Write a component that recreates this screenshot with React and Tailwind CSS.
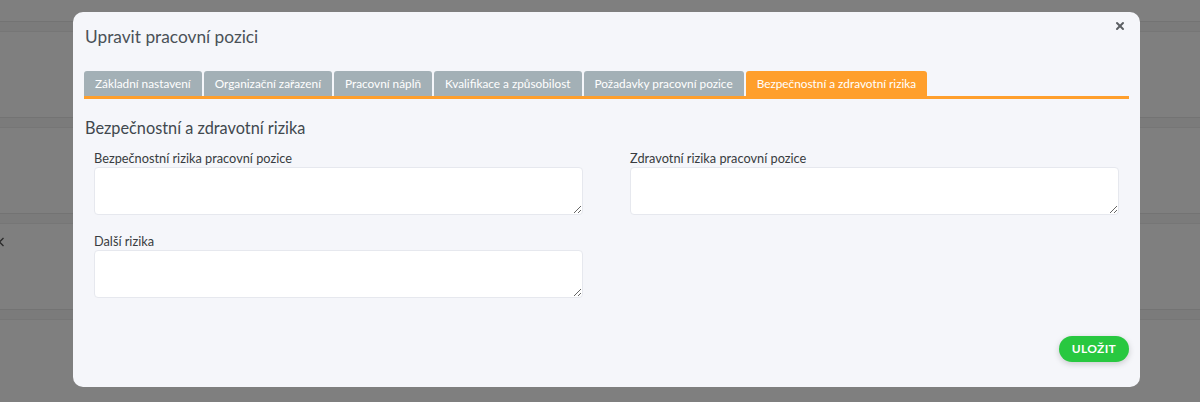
import { X } from "lucide-react";

const tabs = [
  "Základní nastavení",
  "Organizační zařazení",
  "Pracovní náplň",
  "Kvalifikace a způsobilost",
  "Požadavky pracovní pozice",
  "Bezpečnostní a zdravotní rizika",
];

const BgRow = ({ children }) => (
  <div className="flex flex-col">
    <div className="h-px bg-[#737373]" />
    <div className="h-[9px] bg-[#7b7b7b]" />
    <div className="h-px bg-[#767676]" />
    <div className="h-[85px]">{children}</div>
  </div>
);

const Field = ({ label, className = "" }) => (
  <div className={"flex flex-col " + className}>
    <label className="text-[12.75px] leading-4 text-[#383c40]">{label}</label>
    <textarea className="mt-px h-[48px] w-[489px] rounded-[4px] border border-[#e6e8ee] bg-white outline-none" />
  </div>
);

export default function App() {
  const active = tabs.length - 1;

  return (
    <div
      className="relative h-[402px] w-[1200px] overflow-hidden bg-[#7f7f7f]"
      style={{ fontFamily: "Lato, 'Open Sans', sans-serif" }}
    >
      {/* page behind overlay */}
      <div className="pt-[21px]">
        <BgRow />
        <BgRow />
        <BgRow>
          <svg className="-ml-[2px] mt-[13px]" width="7" height="10" viewBox="0 0 7 10">
            <path d="M5.5 1 L1.5 5 L5.5 9" fill="none" stroke="#2a2a2a" strokeWidth="1.3" />
          </svg>
        </BgRow>
        <BgRow />
      </div>

      {/* modal */}
      <div className="absolute left-[73px] top-[12px] flex h-[375px] w-[1067px] flex-col rounded-[10px] bg-[#f5f6fa] pl-[11px] pr-[11px] pt-[14px] pb-[25px]">
        <div className="flex items-start justify-between">
          <h1 className="pl-px text-[17.3px] leading-[22px] text-[#4a5157]">Upravit pracovní pozici</h1>
          <button className="-mt-[6px] mr-[3px] text-[#5b5f63]">
            <X size={12} strokeWidth={4} />
          </button>
        </div>

        {/* tabs */}
        <div className="mt-[23px] flex gap-[2px] border-b-[3px] border-[#ff9f2c]">
          {tabs.map((t, i) => (
            <div
              key={t}
              className={
                "h-[25px] rounded-t-[3px] px-[11px] text-[11.8px] leading-[25px] text-white " +
                (i === active ? "bg-[#ff9f2c]" : "bg-[#a3b0b6]")
              }
            >
              {t}
            </div>
          ))}
        </div>

        <h2 className="mt-[18px] pl-px text-[16.3px] leading-[22px] text-[#41484e]">
          Bezpečnostní a zdravotní rizika
        </h2>

        <div className="mt-[11px] flex pl-[10px]">
          <div className="flex flex-col">
            <Field label="Bezpečnostní rizika pracovní pozice" />
            <Field label="Další rizika" className="mt-[18px]" />
          </div>
          <Field label="Zdravotní rizika pracovní pozice" className="ml-[47px]" />
        </div>

        <div className="mt-auto flex justify-end">
          <button className="h-[26px] rounded-full bg-[#28c840] px-[13px] text-[12px] font-bold tracking-wide text-white shadow-[0_2px_6px_rgba(0,0,0,0.18)]">
            ULOŽIT
          </button>
        </div>
      </div>
    </div>
  );
}
